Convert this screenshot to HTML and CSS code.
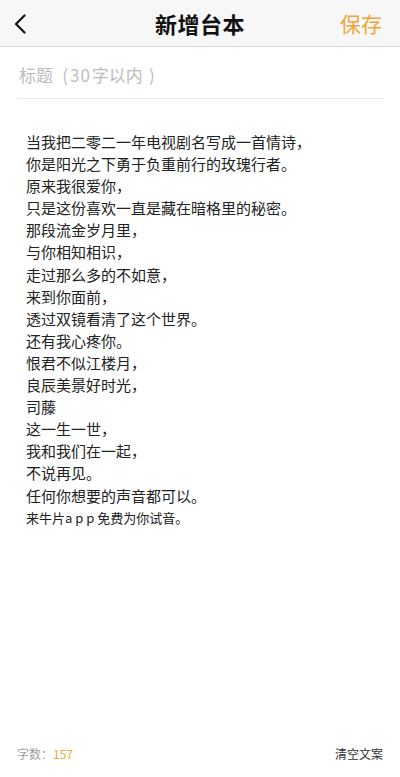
FILE: index.html
```html
<!DOCTYPE html>
<html lang="zh-CN">
<head>
<meta charset="utf-8">
<title>新增台本</title>
<link rel="stylesheet" href="styles.css">
</head>
<body>
<div class="page">
  <header class="nav">
    <span class="back">
      <svg width="12" height="20" viewBox="0 0 12 20"><path d="M10.5 1.5 L2 10 L10.5 18.5" fill="none" stroke="#111" stroke-width="2.2" stroke-linecap="round" stroke-linejoin="round"/></svg>
    </span>
    <h1 class="nav-title">新增台本</h1>
    <span class="save">保存</span>
  </header>
  <div class="title-field">
    <span class="placeholder">标题<span class="lp">(</span><span class="num">30</span>字以内<span class="rp">)</span></span>
  </div>
  <main class="script">
    <p>当我把二零二一年电视剧名写成一首情诗，</p>
    <p>你是阳光之下勇于负重前行的玫瑰行者。</p>
    <p>原来我很爱你，</p>
    <p>只是这份喜欢一直是藏在暗格里的秘密。</p>
    <p>那段流金岁月里，</p>
    <p>与你相知相识，</p>
    <p>走过那么多的不如意，</p>
    <p>来到你面前，</p>
    <p>透过双镜看清了这个世界。</p>
    <p>还有我心疼你。</p>
    <p>恨君不似江楼月，</p>
    <p>良辰美景好时光，</p>
    <p>司藤</p>
    <p>这一生一世，</p>
    <p>我和我们在一起，</p>
    <p>不说再见。</p>
    <p>任何你想要的声音都可以。</p>
    <p class="small">来牛片a p p 免费为你试音。</p>
  </main>
  <footer class="footer">
    <span class="count">字数：<em>157</em></span>
    <span class="clear">清空文案</span>
  </footer>
</div>
</body>
</html>
```
FILE: styles.css
```css
* { box-sizing: border-box; }
html, body { margin: 0; padding: 0; }
body {
  font-family: "Noto Sans CJK SC", "Noto Sans", "Liberation Sans", sans-serif;
  background: #fff;
  color: #222;
}
.page {
  width: 400px;
  height: 777px;
  display: flex;
  flex-direction: column;
}
.nav {
  height: 47px;
  background: #f7f7f7;
  border-bottom: 1px solid #dcdcdc;
  display: flex;
  align-items: center;
  justify-content: space-between;
  padding: 0 18px 0 14px;
  position: relative;
}
.back { display: flex; align-items: center; width: 40px; padding-top: 2px; }
.nav-title {
  margin: 0;
  font-size: 22px;
  font-weight: 700;
  color: #111;
  letter-spacing: 0.5px;
  position: absolute;
  left: 0; right: 0;
  text-align: center;
  pointer-events: none;
  line-height: 46px;
}
.save {
  font-size: 21px;
  color: #f0a53a;
  line-height: 46px;
}
.title-field {
  margin: 0 16px 0 17px;
  height: 52px;
  border-bottom: 1px solid #e6e6e6;
  display: flex;
  align-items: center;
  padding-left: 2px;
  padding-top: 4px;
}
.placeholder {
  font-size: 17px;
  color: #bdbdbd;
  white-space: nowrap;
}
.placeholder .lp {
  display: inline-block;
  width: 17px;
  text-align: right;
  padding-right: 2px;
}
.placeholder .num {
  letter-spacing: 1px;
  margin-right: 1px;
}
.placeholder .rp {
  display: inline-block;
  width: 20px;
  text-align: left;
  padding-left: 6px;
}
.script {
  flex: 1;
  padding: 32px 20px 0 26px;
}
.script p {
  margin: 0;
  font-size: 15px;
  line-height: 22.1px;
  color: #222;
}
.script p.small { font-size: 13px; }
.footer {
  height: 47px;
  display: flex;
  align-items: center;
  justify-content: space-between;
  padding: 0 17px 0 17px;
  font-size: 12px;
}
.count { color: #a0a0a0; }
.count em { font-style: normal; color: #f0a53a; }
.clear { color: #333; }
```
